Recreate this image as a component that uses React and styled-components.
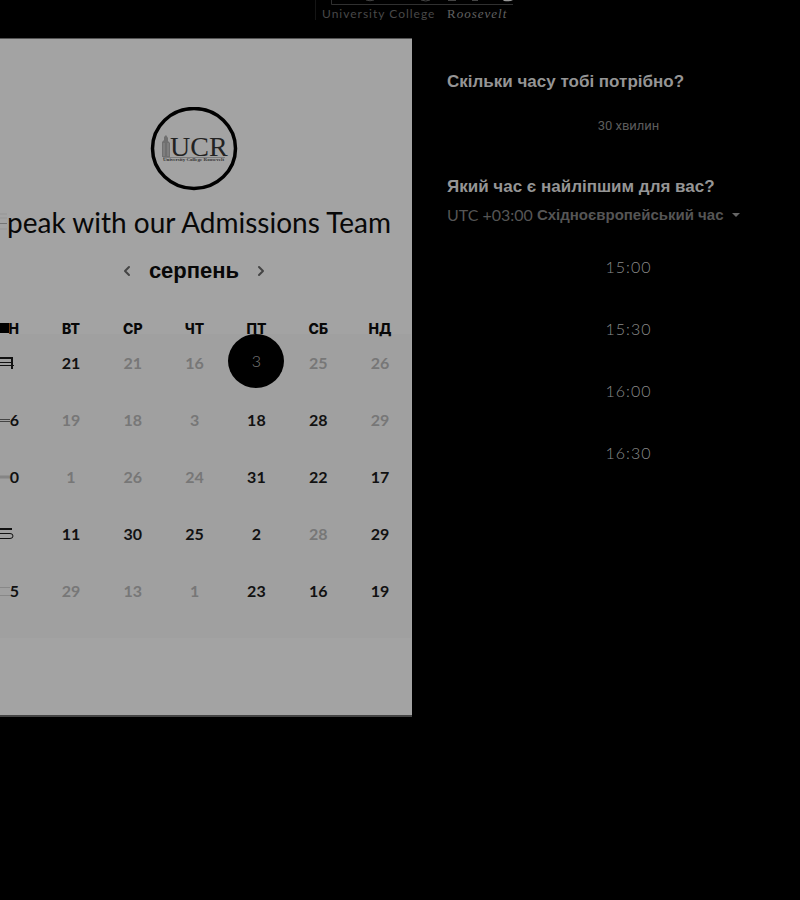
import React from "react";
import styled, { createGlobalStyle } from "styled-components";
import { ChevronLeft, ChevronRight } from "lucide-react";

const Global = createGlobalStyle`
  *, *::before, *::after { box-sizing: border-box; }
  body { margin: 0; background: #000; font-family: Lato, "Liberation Sans", sans-serif; }
  button, select { font: inherit; color: inherit; background: none; border: 0; padding: 0; margin: 0; cursor: pointer; }
  h1, h2, p { margin: 0; }
`;

const Page = styled.div`
  min-height: 100vh;
  background: #000;
  overflow: hidden;
`;

const Header = styled.header`
  height: 38px;
  padding-left: 28px;
  display: flex;
  justify-content: center;
`;

const Wordmark = styled.svg`
  display: block;
  width: 200px;
  height: 22px;
`;

const Scheduler = styled.main`
  display: grid;
  grid-template-columns: 103fr 97fr;
`;

const DatePanel = styled.section`
  background: #a3a3a3;
  border-top: 1px solid #555;
  border-bottom: 2px solid #444;
  padding: 68px 1px 77px 0;
  min-width: 0;
  overflow: hidden;
`;

const Centered = styled.div`
  display: flex;
  align-items: center;
  justify-content: center;
  padding-right: 23px;
`;

const Crest = styled.svg`
  display: block;
  width: 88px;
  height: 84px;
`;

const TitleRow = styled.div`
  display: flex;
  align-items: center;
  justify-content: flex-end;
  margin-top: 14px;
  padding-right: 20px;
`;

const Title = styled.h1`
  font-size: 28px;
  line-height: 34px;
  font-weight: 400;
  color: #080808;
  white-space: nowrap;
`;

const Streak = styled.svg`
  display: block;
  flex: 1 1 0;
  min-width: 0;
  height: 20px;
`;

const MonthRow = styled(Centered)`
  margin-top: 16px;
  height: 32px;
  gap: 14px;
`;

const Month = styled.h2`
  font: 700 22px/32px "Liberation Sans", sans-serif;
  color: #080808;
`;

const Arrow = styled.button`
  display: flex;
  color: #444;
`;

const Calendar = styled.table`
  width: 100%;
  margin-top: 35px;
  table-layout: fixed;
  border-collapse: collapse;
`;

const CalendarFoot = styled.div`
  height: 19px;
  background: #a0a0a0;
`;

const FirstCol = styled.col`
  width: 40px;
`;

const Weekday = styled.th`
  height: 11px;
  padding: 0;
  font: 800 14px/11px Inter, sans-serif;
  color: #080808;
  text-align: center;
`;

const Body = styled.tbody`
  background: #a0a0a0;
`;

const Cell = styled.td`
  height: 57px;
  padding: 0;
  text-align: center;
  vertical-align: top;
`;

const Day = styled.button`
  display: block;
  width: ${(p) => (p.$edge ? "20px" : "56px")};
  height: ${(p) => (p.$selected ? "54px" : "57px")};
  margin: ${(p) => (p.$edge ? "0" : "0 auto")};
  border-radius: 50%;
  font-size: 16px;
  line-height: ${(p) => (p.$selected ? "54px" : "57px")};
  font-weight: ${(p) => (p.$selected ? 300 : 700)};
  background: ${(p) => (p.$selected ? "#000" : "none")};
  color: ${(p) => (p.$selected ? "#777" : p.$muted ? "#777" : "#111")};
`;

const EdgeCell = styled.div`
  display: flex;
  align-items: center;
  justify-content: flex-end;
  width: 19px;
`;

const EdgeMark = styled.svg`
  display: block;
  flex: none;
  width: ${(p) => p.$w}px;
  height: 12px;
`;

const TimePanel = styled.section`
  padding: 34px 0 0 35px;
  min-width: 0;
`;

const Question = styled.h2`
  font: 700 17px/20px "Liberation Sans", sans-serif;
  color: #959595;
  white-space: nowrap;
`;

const Options = styled.div`
  display: flex;
  flex-direction: column;
  align-items: center;
  padding-left: 10px;
`;

const Duration = styled.button`
  margin: 24px 0 41px;
  height: 20px;
  font: 400 13px/20px Roboto, sans-serif;
  color: #5c5c5c;
`;

const Zone = styled.div`
  display: flex;
  align-items: center;
  gap: 4px;
  height: 20px;
  margin-top: 8px;
  color: #555;
`;

const ZoneLabel = styled.label`
  font-size: 16px;
  line-height: 20px;
  white-space: nowrap;
`;

const ZoneSelect = styled.select`
  appearance: none;
  font: 700 15px/20px "Liberation Sans", sans-serif;
`;

const Caret = styled.svg`
  width: 8px;
  height: 5px;
  margin-left: 4px;
  fill: #666;
`;

const Times = styled(Options)`
  padding-top: 11px;
`;

const Time = styled.button`
  height: 62px;
  font-size: 16px;
  line-height: 62px;
  font-weight: 300;
  letter-spacing: 1px;
  color: #8a8a8a;
`;

const weeks = [
  ["4", "21", "21m", "16m", "3s", "25m", "26m"],
  ["6", "19m", "18m", "3m", "18", "28", "29m"],
  ["0", "1m", "26m", "24m", "31", "22", "17"],
  ["5", "11", "30", "25", "2", "28m", "29"],
  ["5", "29m", "13m", "1m", "23", "16", "19"],
];

function Edge({ row }) {
  if (row === 0)
    return (
      <Day $edge aria-label="4">
        <EdgeMark $w={20} viewBox="0 0 20 12" fill="none" stroke="#111">
          <path d="M0 1H12V12" strokeWidth="2" />
          <path d="M0 5.500H11M0 8.500H14" />
        </EdgeMark>
      </Day>
    );
  if (row === 3)
    return (
      <Day $edge aria-label="5">
        <EdgeMark $w={20} viewBox="0 0 20 12" fill="none" stroke="#111">
          <path d="M0 1H12" strokeWidth="2" />
          <path d="M0 5.500H10Q13 5.500 13 8T10 10.500H0" />
        </EdgeMark>
      </Day>
    );
  return (
    <Day $edge>
      <EdgeCell>
        <EdgeMark $w={10} viewBox="0 0 10 12">
          {row === 1 && <path d="M0 7.500H10M0 5.500H10" stroke="#444" />}
          {row === 2 && <path d="M0 6H10" stroke="#858585" strokeWidth="3" />}
          {row === 4 && <path d="M0 2.500H10M0 10.500H10" stroke="#888" />}
        </EdgeMark>
        {weeks[row][0]}
      </EdgeCell>
    </Day>
  );
}

export default function App() {
  return (
    <Page>
      <Global />
      <Header>
        <Wordmark viewBox="0 0 200 22">
          <path d="M1.500 0V20" stroke="#151515" />
          <path d="M17.500 0V4.500H199" fill="none" stroke="#303030" />
          <path d="M52 0Q56 1.500 60 0M107 0Q112 2 116 0M134 .5H142M158 .5H164" stroke="#444" fill="none" />
          <path d="M189 0H199Q196 2 190 1Z" fill="#999" />
          <text x="8" y="18" fontSize="12" fontFamily="Lato, sans-serif" letterSpacing="1" fill="#484848">University College</text>
          <text x="133" y="18" fontSize="13" fontFamily="Liberation Serif, serif" letterSpacing="1" fill="#606060">
            R<tspan fontStyle="italic">oosevelt</tspan>
          </text>
        </Wordmark>
      </Header>
      <Scheduler>
        <DatePanel>
          <Centered>
            <Crest viewBox="0 0 88 84" role="img" aria-label="UCR">
              <ellipse cx="44" cy="41.500" rx="41.500" ry="40" fill="none" stroke="#000" strokeWidth="3.500" />
              <path d="M12 50V35L14 33V30L16 28L18 31V34L20 36V50Z" fill="#707070" />
              <path d="M14 36V49M18 36V49" stroke="#8c8c8c" />
              <text x="20" y="49" fontSize="28" fontFamily="Liberation Serif, serif" fill="#222">UCR</text>
              <path d="M13 50.500H75" stroke="#555" strokeWidth=".5" />
              <text x="13" y="54" fontSize="5" fontFamily="Liberation Serif, serif" fontWeight="700" fill="#333">University College Roosevelt</text>
            </Crest>
          </Centered>
          <TitleRow>
            <Streak viewBox="0 0 12 20" preserveAspectRatio="none">
              <path d="M0 2H12M0 6H12M0 17H12" stroke="#929292" />
              <path d="M0 11.500H12" stroke="#686868" />
            </Streak>
            <Title>peak with our Admissions Team</Title>
          </TitleRow>
          <MonthRow>
            <Arrow aria-label="Попередній місяць"><ChevronLeft size={16} strokeWidth={3} /></Arrow>
            <Month>серпень</Month>
            <Arrow aria-label="Наступний місяць"><ChevronRight size={16} strokeWidth={3} /></Arrow>
          </MonthRow>
          <Calendar>
            <colgroup>
              <FirstCol />
              <col span={6} />
            </colgroup>
            <thead>
              <tr>
                <Weekday>
                  <EdgeCell>
                    <EdgeMark $w={11} viewBox="0 0 11 12"><path d="M0 1H11V11H0Z" /></EdgeMark>
                    Н
                  </EdgeCell>
                </Weekday>
                {["ВТ", "СР", "ЧТ", "ПТ", "СБ", "НД"].map((d) => <Weekday key={d}>{d}</Weekday>)}
              </tr>
            </thead>
            <Body>
              {weeks.map((week, row) => (
                <tr key={row}>
                  <Cell><Edge row={row} /></Cell>
                  {week.slice(1).map((d, i) => (
                    <Cell key={i}>
                      <Day $muted={d.endsWith("m")} $selected={d.endsWith("s")}>{parseInt(d, 10)}</Day>
                    </Cell>
                  ))}
                </tr>
              ))}
            </Body>
          </Calendar>
          <CalendarFoot />
        </DatePanel>
        <TimePanel>
          <Question>Скільки часу тобі потрібно?</Question>
          <Options><Duration>30 хвилин</Duration></Options>
          <Question>Який час є найліпшим для вас?</Question>
          <Zone>
            <ZoneLabel htmlFor="zone">UTC +03:00</ZoneLabel>
            <ZoneSelect id="zone"><option>Східноєвропейський час</option></ZoneSelect>
            <Caret viewBox="0 0 8 5"><path d="M0 0H8L4 4Z" /></Caret>
          </Zone>
          <Times>
            {["15:00", "15:30", "16:00", "16:30"].map((t) => <Time key={t}>{t}</Time>)}
          </Times>
        </TimePanel>
      </Scheduler>
    </Page>
  );
}
